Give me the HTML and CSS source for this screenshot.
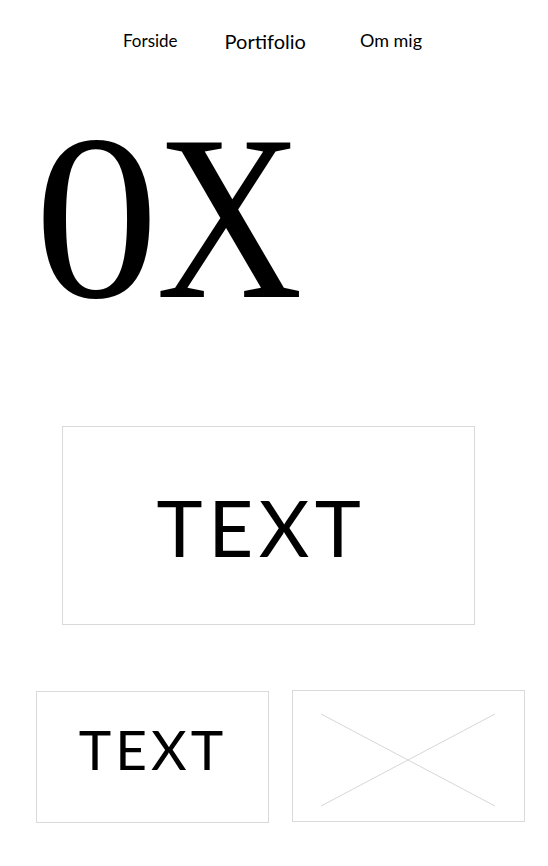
FILE: index.html
```html
<!DOCTYPE html>
<html>
<head>
<meta charset="utf-8">
<link rel="stylesheet" href="styles.css">
</head>
<body>
<nav class="nav">
  <a class="nav-item nav-a">Forside</a>
  <a class="nav-item nav-b">Portifolio</a>
  <a class="nav-item nav-c">Om mig</a>
</nav>
<section class="hero">
  <h1 class="logo"><span class="logo-0">0</span><span class="logo-x">X</span></h1>
</section>
<section class="feature">
  <div class="box box-big"><span class="box-text big">TEXT</span></div>
</section>
<section class="row">
  <div class="box box-small"><span class="box-text small">TEXT</span></div>
  <div class="box box-small box-img">
    <svg class="placeholder" width="231" height="130" viewBox="0 0 231 130">
      <line x1="28" y1="23" x2="202" y2="115" stroke="#d6d6d6" stroke-width="1"/>
      <line x1="28" y1="115" x2="202" y2="23" stroke="#d6d6d6" stroke-width="1"/>
    </svg>
  </div>
</section>
</body>
</html>
```
FILE: styles.css
```css
html, body {
  margin: 0;
  padding: 0;
  background: #fff;
  color: #000;
}
body {
  width: 548px;
  font-family: "Lato", "Open Sans", sans-serif;
}
.nav {
  display: flex;
  align-items: baseline;
  height: 80px;
  box-sizing: border-box;
  padding: 27px 0 0 123px;
}
.nav-item {
  color: #000;
  text-decoration: none;
  font-size: 17px;
}
.nav-b {
  font-size: 20px;
  margin-left: 47px;
  position: relative;
  top: 2px;
}
.nav-c {
  font-size: 18px;
  margin-left: 54px;
}
.hero {
  height: 320px;
}
.logo {
  margin: 0;
  padding-left: 34px;
  font-family: "Liberation Serif", serif;
  font-weight: normal;
  font-size: 236px;
  line-height: 276px;
  height: 280px;
  white-space: nowrap;
}
.logo-0 {
  display: inline-block;
  transform: scaleX(1.06);
  transform-origin: left center;
}
.logo-x {
  display: inline-block;
  margin-left: 4px;
  transform: scaleX(0.86);
  transform-origin: left center;
}
.box {
  box-sizing: border-box;
  border: 1px solid #d9d9d9;
  display: flex;
  align-items: center;
  justify-content: center;
}
.feature {
  padding: 26px 0 0 62px;
  height: 291px;
  box-sizing: border-box;
}
.box-big {
  width: 413px;
  height: 199px;
}
.box-text {
  font-weight: 400;
  line-height: 1;
}
.big {
  font-size: 78px;
  letter-spacing: 5.5px;
  margin-left: -14px;
  margin-top: 2px;
}
.row {
  display: flex;
  gap: 23px;
  padding: 0 0 0 36px;
  align-items: flex-start;
}
.box-small {
  width: 233px;
  height: 132px;
}
.small {
  font-size: 55px;
  letter-spacing: 4px;
  margin-left: 1px;
  margin-top: -16px;
}
.box-img {
  margin-top: -1px;
}
.placeholder {
  display: block;
}
```
